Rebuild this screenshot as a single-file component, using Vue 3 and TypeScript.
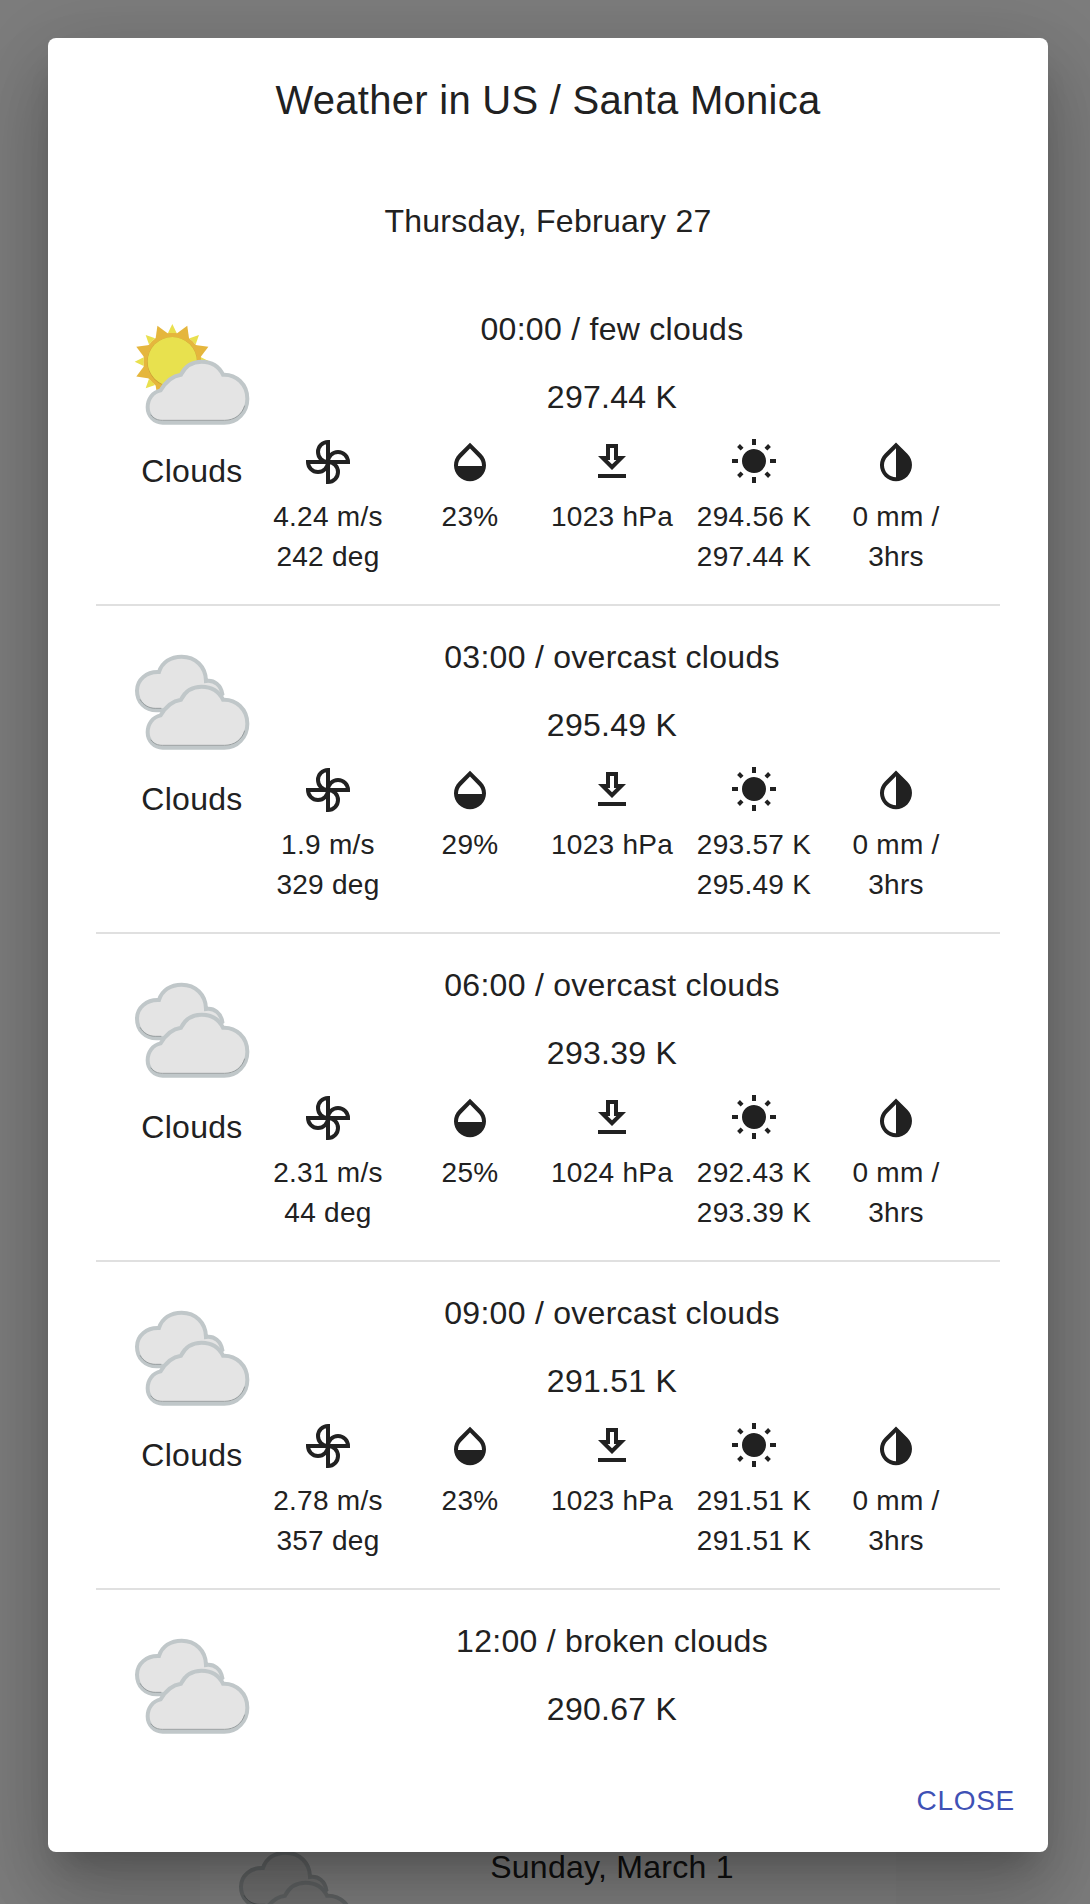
<script setup lang="ts">
interface Details {
  wind: string
  deg: number
  humidity: number
  pressure: number
  min: string
  max: string
}

interface Forecast {
  time: string
  description: string
  temp: string
  sunny?: boolean
  details?: Details
}

const forecasts: Forecast[] = [
  { time: '00:00', description: 'few clouds', temp: '297.44', sunny: true, details: { wind: '4.24', deg: 242, humidity: 23, pressure: 1023, min: '294.56', max: '297.44' } },
  { time: '03:00', description: 'overcast clouds', temp: '295.49', details: { wind: '1.9', deg: 329, humidity: 29, pressure: 1023, min: '293.57', max: '295.49' } },
  { time: '06:00', description: 'overcast clouds', temp: '293.39', details: { wind: '2.31', deg: 44, humidity: 25, pressure: 1024, min: '292.43', max: '293.39' } },
  { time: '09:00', description: 'overcast clouds', temp: '291.51', details: { wind: '2.78', deg: 357, humidity: 23, pressure: 1023, min: '291.51', max: '291.51' } },
  { time: '12:00', description: 'broken clouds', temp: '290.67' },
]

// Spikes of the sun: wide orange ones between the small yellow ones
const small = [0, 45, 90, 135, 180, 225, 270, 315]
const large = small.map((a) => a + 22.5)
</script>

<template>
  <div class="page">
    <svg class="defs" width="0" height="0" aria-hidden="true">
      <symbol id="front-cloud" viewBox="24 12 384 384">
        <path class="cloud" d="M128 323C102 323 83 302 83 277C83 252 98 231 122 226C134 205 155 183 183 179C195 154 218 140 245 140C273 140 297 154 309 179C348 177 382 208 382 251C382 292 352 323 313 323Z" />
        <path class="rim" d="M92 299C101 311 113 316 128 316H313C343 316 366 299 374 272" />
      </symbol>
      <symbol id="back-cloud" viewBox="24 12 384 384">
        <path class="cloud" d="M112 211C75 212 51 186 51 152C51 119 80 94 117 96C126 67 152 50 185 50C226 50 258 80 258 123C283 119 303 136 307 162L250 211Z" />
        <path class="rim" d="M60 178C70 196 88 205 106 205H124" />
      </symbol>
      <symbol id="sun" viewBox="24 18 384 384">
        <path v-for="a in large" :key="a" d="M137 72L157 38L177 72Z" fill="#e5b63d" :transform="`rotate(${a} 157 155)`" />
        <circle cx="157" cy="155" r="87" fill="#e5b63d" />
        <path v-for="a in small" :key="a" d="M144 69L157 42L170 69Z" fill="#e9e04e" :transform="`rotate(${a} 157 155)`" />
        <circle cx="157" cy="156" r="75" fill="#c79b32" />
        <circle cx="157" cy="155" r="74" fill="#e8e14e" />
      </symbol>
    </svg>

    <div class="card">
      <div class="left">
        <svg class="weather" viewBox="0 0 128 128">
          <use href="#back-cloud" width="128" height="128" />
          <use href="#front-cloud" width="128" height="128" />
        </svg>
      </div>
      <div class="card-title">Sunday, March 1</div>
    </div>
    <div class="backdrop">
      <section class="dialog" role="dialog">
        <h2 class="title">Weather in US / Santa Monica</h2>
        <div class="content">
          <p class="date">Thursday, February 27</p>
          <div v-for="f in forecasts" :key="f.time" class="row">
            <div class="left">
              <svg class="weather" viewBox="0 0 128 128">
                <use v-if="f.sunny" href="#sun" width="128" height="128" />
                <use v-else href="#back-cloud" width="128" height="128" />
                <use href="#front-cloud" :y="f.sunny ? 3 : 0" width="128" height="128" />
              </svg>
              <div v-if="f.details" class="label">Clouds</div>
            </div>
            <div class="main">
              <div class="line">{{ f.time }} / {{ f.description }}</div>
              <div class="line">{{ f.temp }} K</div>
              <div v-if="f.details" class="stats">
                <div class="stat">
                  <svg class="icon" viewBox="0 0 24 24">
                    <g fill="none" stroke="currentColor" stroke-width="2">
                      <path v-for="a in [0, 90, 180, 270]" :key="a" d="M12 2a5 5 0 0 0 0 10z" :transform="`rotate(${a} 12 12)`" />
                    </g>
                  </svg>
                  <div>{{ f.details.wind }} m/s</div>
                  <div>{{ f.details.deg }} deg</div>
                </div>
                <div class="stat">
                  <svg class="icon" viewBox="0 0 24 24"><path d="M17.66 8L12 2.35 6.34 8C4.78 9.56 4 11.64 4 13.64s.78 4.11 2.34 5.67 3.61 2.35 5.66 2.35 4.1-.79 5.66-2.35S20 15.64 20 13.64 19.22 9.56 17.66 8zM6 14c.01-2 .62-3.27 1.76-4.4L12 5.27l4.24 4.38C17.38 10.77 17.99 12 18 14H6z" /></svg>
                  <div>{{ f.details.humidity }}%</div>
                </div>
                <div class="stat">
                  <svg class="icon" viewBox="0 0 24 24"><path d="M19 9h-4V3H9v6H5l7 7 7-7zm-8 2V5h2v6h1.17L12 13.17 9.83 11H11zm-6 7h14v2H5z" /></svg>
                  <div>{{ f.details.pressure }} hPa</div>
                </div>
                <div class="stat">
                  <svg class="icon" viewBox="0 0 24 24"><path d="M6.76 4.84l-1.8-1.79-1.41 1.41 1.79 1.79 1.42-1.41zM4 10.5H1v2h3v-2zm9-9.95h-2V3.5h2V.55zm7.45 3.91l-1.41-1.41-1.79 1.79 1.41 1.41 1.79-1.79zm-3.21 13.7l1.79 1.8 1.41-1.41-1.8-1.79-1.4 1.4zM20 10.5v2h3v-2h-3zm-8-5c-3.31 0-6 2.69-6 6s2.69 6 6 6 6-2.69 6-6-2.69-6-6-6zm-1 16.95h2V19.5h-2v2.95zm-7.45-3.91l1.41 1.41 1.79-1.8-1.41-1.41-1.79 1.8z" /></svg>
                  <div>{{ f.details.min }} K</div>
                  <div>{{ f.details.max }} K</div>
                </div>
                <div class="stat">
                  <svg class="icon" viewBox="0 0 24 24"><path d="M17.66 7.93L12 2.27 6.34 7.93c-3.12 3.12-3.12 8.19 0 11.31C7.9 20.8 9.95 21.58 12 21.58c2.05 0 4.1-.78 5.66-2.34 3.12-3.12 3.12-8.19 0-11.31zM12 19.59c-1.6 0-3.11-.62-4.24-1.76C6.62 16.69 6 15.19 6 13.59s.62-3.11 1.76-4.24L12 5.1v14.49z" /></svg>
                  <div>0 mm /</div>
                  <div>3hrs</div>
                </div>
              </div>
            </div>
          </div>
        </div>
        <footer class="actions">
          <button type="button" class="close">CLOSE</button>
        </footer>
      </section>
    </div>
  </div>
</template>

<style scoped>
.page {
  position: relative;
  box-sizing: border-box;
  height: 1904px;
  padding: 1840px 194px 0 200px;
  overflow: hidden;
  background: #fafafa;
  color: #212121;
  font-family: "Liberation Sans", Arial, sans-serif;
  font-size: 32px;
  line-height: 48px;
  letter-spacing: 0.28px;
}
.defs {
  position: absolute;
}
.cloud {
  fill: #e4e4e4;
  stroke: #c0c7c9;
  stroke-width: 12px;
}
.rim {
  fill: none;
  stroke: #8d9394;
  stroke-width: 2.5px;
}
.card {
  display: flex;
  box-sizing: border-box;
  width: 696px;
  height: 200px;
  padding: 0 32px;
  background: #fff;
}
.card-title {
  flex: 1;
  padding-top: 3px;
  text-align: center;
}
.backdrop {
  position: absolute;
  inset: 0;
  box-sizing: border-box;
  padding: 38px 42px 52px 48px;
  background: rgba(0, 0, 0, 0.5);
}
.dialog {
  display: flex;
  flex-direction: column;
  height: 1814px;
  border-radius: 8px;
  background: #fff;
  box-shadow: 0 22px 30px -14px rgba(0, 0, 0, 0.2), 0 48px 76px 6px rgba(0, 0, 0, 0.14), 0 18px 92px 16px rgba(0, 0, 0, 0.12);
}
.title {
  margin: 0;
  padding: 30px 48px 34px;
  font-size: 40px;
  font-weight: 400;
  line-height: 64px;
  text-align: center;
}
.content {
  flex: 1;
  min-height: 0;
  padding: 0 48px;
  overflow: hidden;
}
.date {
  margin: 0;
  padding: 31px 0 33px;
  text-align: center;
}
.row {
  display: flex;
  box-sizing: border-box;
  height: 328px;
  padding: 27px 32px 0;
  border-bottom: 2px solid #e0e0e0;
}
.left {
  flex: 0 0 128px;
  text-align: center;
}
.weather {
  display: block;
  width: 128px;
  height: 128px;
}
.row .left {
  padding-top: 11px;
}
.label {
  padding-top: 3px;
}
.main {
  flex: 1;
  text-align: center;
}
.line {
  margin-bottom: 20px;
}
.stats {
  display: grid;
  grid-template-columns: repeat(5, 1fr);
  margin: -3px 1px 0;
  font-size: 28px;
  line-height: 40px;
}
.stat {
  white-space: nowrap;
}
.icon {
  display: block;
  width: 48px;
  height: 48px;
  margin: 0 auto 11px;
  fill: currentColor;
}
.actions {
  display: flex;
  justify-content: flex-end;
  padding: 17px 17px 15px 16px;
}
.close {
  height: 72px;
  padding: 0 16px;
  border: 0;
  background: none;
  color: #3f51b5;
  font: inherit;
  font-size: 28px;
  letter-spacing: 0.7px;
}
</style>

<style>
body {
  margin: 0;
}
</style>
